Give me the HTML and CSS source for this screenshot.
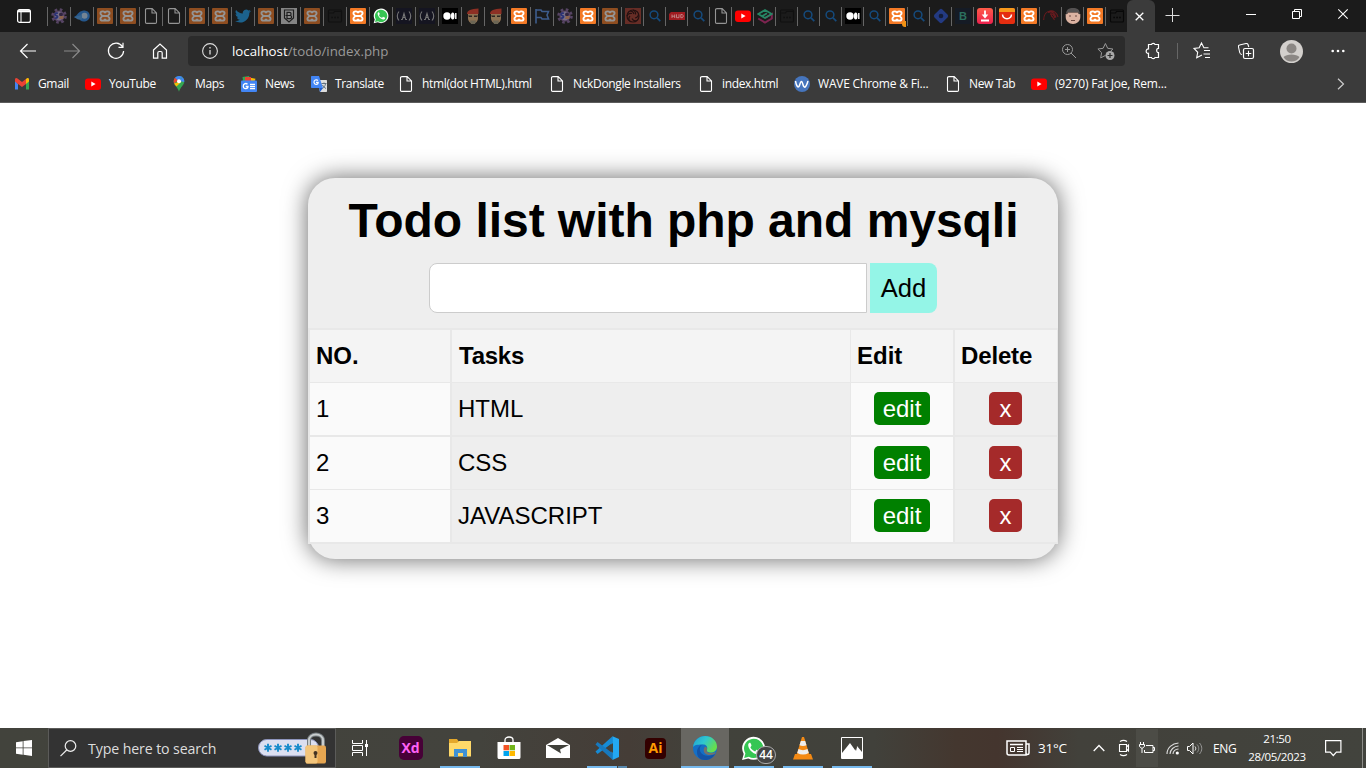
FILE: index.html
```html
<!DOCTYPE html>
<html lang="en">
<head>
<meta charset="utf-8">
<title>Todo list</title>
<link rel="stylesheet" href="styles.css">
</head>
<body>
<svg class="sprite" aria-hidden="true">
  <symbol id="xampp" viewBox="0 0 16 16"><rect width="16" height="16" rx="1" fill="#f47a26"/><path d="M8 5.300C8 2.700 3.400 2.700 3.400 5.300c0 1.500 1.600 1.400 1.600 2.700S3.400 9.200 3.400 10.700c0 2.600 4.600 2.600 4.600 0 0 2.600 4.600 2.600 4.600 0 0-1.500-1.600-1.400-1.600-2.700s1.600-1.200 1.600-2.700C12.600 2.700 8 2.700 8 5.300zM5.500 8h5" fill="none" stroke="#fff" stroke-width="1.800"/></symbol>
  <symbol id="gear" viewBox="0 0 16 16"><circle cx="8" cy="8" r="6.500" fill="none" stroke="#8c6ba5" stroke-width="2.600" stroke-dasharray="2.600 2.500"/><circle cx="8" cy="8" r="5" fill="#c9b8e4" stroke="#8a62a4" stroke-width="1.200"/><path d="M7 5.300c-3-1-4 1.700-1.700 2.300S6.500 10.500 3.700 10" fill="none" stroke="#3949c8" stroke-width="1.700"/><circle cx="10" cy="6.500" r="2" fill="#452f63"/><path d="M8 11l1-3h4l-1 3z" fill="#f0a67a"/></symbol>
  <symbol id="swoosh" viewBox="0 0 16 16"><path d="M0 9C3 8 4.500 3 9.500 2.500c4 0 6.300 2.200 6.300 5.400S13 13.500 9.500 13.500c-2.500 0-3-1-4.500-2.500z" fill="#2f8cf0"/><circle cx="10.500" cy="7.800" r="3" fill="#c2e2ff"/><path d="M0 9l8-2v4.500H4z" fill="#4fa6f5"/></symbol>
  <symbol id="doc" viewBox="0 0 16 16"><path d="M4 .6h5.200l4.300 4.300v9.300c0 .8-.4 1.200-1.200 1.200H3.700c-.8 0-1.200-.4-1.200-1.200V1.800C2.500 1 3 .6 4 .6zM9 .8V5h4.300" fill="none" stroke="#fff" stroke-width="1.100"/></symbol>
  <symbol id="twitter" viewBox="0 0 24 24"><path fill="#1da1f2" d="M23.950 4.570a10 10 0 0 1-2.820.780 4.960 4.960 0 0 0 2.160-2.720 9.900 9.900 0 0 1-3.120 1.190 4.920 4.920 0 0 0-8.390 4.480A14 14 0 0 1 1.640 3.160a4.920 4.920 0 0 0 1.520 6.570 4.900 4.900 0 0 1-2.230-.610v.060a4.920 4.920 0 0 0 3.950 4.830 5 5 0 0 1-2.210.080 4.940 4.940 0 0 0 4.600 3.420A9.870 9.870 0 0 1 0 19.540a14 14 0 0 0 7.550 2.210c9.140 0 14.310-7.720 13.980-14.650a9.900 9.900 0 0 0 2.420-2.530z"/></symbol>
  <symbol id="shield" viewBox="0 0 16 16"><rect width="16" height="16" fill="#e2e2e2"/><path d="M3.500 2h9v8L8 14l-4.500-4z" fill="#eee" stroke="#222" stroke-width="1.200"/><path d="M6 4.300h2.500a1.600 1.600 0 0 1 0 3.200H6zm0 3.200h3a1.600 1.600 0 0 1 0 3.200H6zM4.500 7.500h2" fill="none" stroke="#222" stroke-width="1.200"/></symbol>
  <symbol id="folder" viewBox="0 0 16 16"><path d="M2.500 2h11c.8 0 1 .4 1 1v10c0 .7-.3 1-1 1h-11c-.7 0-1-.3-1-1V3c0-.7.300-1 1-1zM1.500 5h5l1-1.500h7" fill="none" stroke="#080808" stroke-width="1.100"/><path d="M4.300 9.500h1.700M7.200 9.500h1.700M10.100 9.500h1.700" stroke="#080808" stroke-width="1.600"/></symbol>
  <symbol id="wa" viewBox="0 0 24 24"><path d="M1 23l1.600-5.700A11 11 0 1 1 7 21.500z" fill="#fff"/><path d="M3 21l1.200-4.300A9.300 9.300 0 1 1 7.600 20z" fill="#36c653"/><path d="M8.200 6.500c-1 .6-1.500 1.500-1.200 3 .8 3.800 4.200 7.200 8 7.900 1.500.2 2.700-.7 3-1.700.2-.7.100-1-.4-1.300l-2.100-1c-.4-.2-.7-.1-1 .3l-.9 1.100c-2-.7-3.700-2.200-4.600-4.100l.9-1.200c.2-.4.2-.7 0-1.100l-.8-1.600c-.2-.400-.5-.5-.9-.300z" fill="#fff"/></symbol>
  <symbol id="fcc" viewBox="0 0 16 16"><rect width="16" height="16" fill="#151521"/><path d="M3 3.500C.7 6 .7 10 3 12.500M13 3.500c2.300 2.500 2.300 6.500 0 9M5 11.500h1.300L8 5.500l1.700 6H11M7 9.500h2" fill="none" stroke="#777" stroke-width="1.100"/></symbol>
  <symbol id="medium" viewBox="0 0 16 16"><rect width="16" height="16" fill="#000"/><circle cx="5" cy="8" r="3.700" fill="#fff"/><ellipse cx="10.700" cy="8" rx="1.800" ry="3.500" fill="#fff"/><path d="M13.800 5v6" stroke="#fff" stroke-width="1.400"/></symbol>
  <symbol id="ninja" viewBox="0 0 16 16"><path d="M3 6h10v4c0 3-2 5.500-5 5.500S3 13 3 10z" fill="#f3bd83"/><path d="M2 6C2 2 6 1 13.500.5L13.500 6z" fill="#f3412c"/><path d="M3 7.500h4v1.500H4zM9 7.500h4L12 9H9z" fill="#3c2f27"/><path d="M5 12.500h6l-1 3.500H6z" fill="#b5a98a"/></symbol>
  <symbol id="flag" viewBox="0 0 16 16"><path d="M2 1v14.500M2 2h5l1 1.500h6.500L13 7l1.500 4H8L7 9.500H2" fill="none" stroke="#5c96f0" stroke-width="1.600"/></symbol>
  <symbol id="swirl" viewBox="0 0 16 16"><rect width="16" height="16" fill="#e34b38"/><circle cx="8" cy="8" r="6" fill="none" stroke="#300" stroke-width="1.200"/><path d="M8 2c2 1 3 2 2.500 4.500M13.500 6c0 2.500-1 3.500-3.500 4M12 12.500c-2 1-4 0-5-2M5 13.500c-1.500-2-1.500-4 0-5.500M2 8c1-2.500 2.500-3 5-2.500M5 3c2 0 3.500 1 4 3" fill="none" stroke="#300" stroke-width="1.200"/></symbol>
  <symbol id="find" viewBox="0 0 16 16"><circle cx="7" cy="6.800" r="3.900" fill="none" stroke="#154a7c" stroke-width="1.500"/><path d="M10 9.800l3.300 3.300" stroke="#154a7c" stroke-width="1.700"/></symbol>
  <symbol id="hud" viewBox="0 0 16 16"><path d="M2 4h14v8H0V6z" fill="#a01b20"/><path d="M3 6.500v3.500M5.700 6.500v3.500M3 8.200h2.700M7.500 6.300v3.400H10V6.300M11.800 6.500h1.500l.8 1v1.500l-.8.7h-1.500z" fill="none" stroke="#c79a9a" stroke-width=".8"/></symbol>
  <symbol id="yt" viewBox="0 0 16 16"><rect y="2.500" width="16" height="11.500" rx="3" fill="#f00"/><path d="M6.300 5.600v5l4.300-2.500z" fill="#fff"/></symbol>
  <symbol id="hex" viewBox="0 0 16 16"><path d="M1.200 10.500L8 14.500l6.800-4V6L8 10" fill="none" stroke="#7d2450" stroke-width="2"/><path d="M8 10L1.200 6 8 2l6.800 4L8 10 5 8.200l5-3" fill="none" stroke="#268765" stroke-width="1.800"/></symbol>
  <symbol id="diamond" viewBox="0 0 16 16"><rect x="2.400" y="2.400" width="11.200" height="11.200" rx="2" transform="rotate(45 8 8)" fill="#233a82"/><circle cx="8" cy="8" r="2.300" fill="#131c38"/></symbol>
  <symbol id="down" viewBox="0 0 16 16"><defs><linearGradient id="rd" x1="0" y1="0" x2="0" y2="1"><stop stop-color="#ff5b48"/><stop offset="1" stop-color="#ed214e"/></linearGradient></defs><rect width="16" height="16" rx="3" fill="url(#rd)"/><path d="M8 2.500v6M4 12.500h8" stroke="#fff" stroke-width="1.800"/><path d="M4.700 6.500h6.600L8 10.500z" fill="#fff"/></symbol>
  <symbol id="ali" viewBox="0 0 16 16"><rect width="16" height="16" rx="2" fill="#e52d10"/><path d="M0 4V2c0-1.300.7-2 2-2h12c1.300 0 2 .7 2 2v2z" fill="#f7991c"/><path d="M3.500 6.500c.5 5.500 8.500 5.500 9 0" fill="none" stroke="#fff" stroke-width="1.500"/></symbol>
  <symbol id="radar" viewBox="0 0 16 16"><path d="M.7 12C.5 1 13 0 15 9M5 4.500c4-2 7 1 8 5M7 6c2.500-1 4 1 5 4M8 8c1.500 0 2 1 3 3M7.500 6l4 6" fill="none" stroke="#6b1a1e" stroke-width="1.100"/></symbol>
  <symbol id="face" viewBox="0 0 16 16"><path d="M.7 6h14.600v3c0 4-3.300 7-7.300 7S.7 13 .7 9z" fill="#dcb3a2"/><path d="M1 7C1 1 4 0 8 0s7 1 7 7l-1.500-3h-11z" fill="#555252"/><path d="M2.500 4.500h11V7h-11z" fill="#dcb3a2"/><path d="M4 8h2M10 8h2M6 12.500h4" stroke="#6c4a42" stroke-width="1"/></symbol>
</svg>

<header class="browser">
  <div class="tabs">
    <span class="workspace"><svg width="14" height="14" viewBox="0 0 14 14"><rect x=".6" y=".6" width="12.800" height="12.800" rx="2" fill="none" stroke="#fff" stroke-width="1.200"/><path d="M1 2.200h12" stroke="#fff" stroke-width="2.200"/><path d="M4 3v10" stroke="#fff" stroke-width="1"/></svg></span>
    <i class="tab dim"><svg><use href="#gear"/></svg></i><i class="tab dim"><svg><use href="#swoosh"/></svg></i><i class="tab dim"><svg><use href="#xampp"/></svg></i><i class="tab dim"><svg><use href="#xampp"/></svg></i><i class="tab dim"><svg><use href="#doc"/></svg></i><i class="tab dim"><svg><use href="#doc"/></svg></i><i class="tab dim"><svg><use href="#xampp"/></svg></i><i class="tab dim"><svg><use href="#xampp"/></svg></i><i class="tab dim"><svg><use href="#twitter"/></svg></i><i class="tab dim"><svg><use href="#xampp"/></svg></i><i class="tab dim"><svg><use href="#shield"/></svg></i><i class="tab dim"><svg><use href="#xampp"/></svg></i><i class="tab dim"><svg><use href="#folder"/></svg></i>
    <i class="tab"><svg><use href="#xampp"/></svg></i><i class="tab"><svg><use href="#wa"/></svg></i><i class="tab"><svg><use href="#fcc"/></svg></i><i class="tab"><svg><use href="#fcc"/></svg></i><i class="tab"><svg><use href="#medium"/></svg></i><i class="tab dim"><svg><use href="#ninja"/></svg></i><i class="tab dim"><svg><use href="#ninja"/></svg></i><i class="tab"><svg><use href="#xampp"/></svg></i><i class="tab dim"><svg><use href="#flag"/></svg></i><i class="tab dim"><svg><use href="#gear"/></svg></i>
    <i class="tab narrow"><svg><use href="#xampp"/></svg></i><i class="tab dim"><svg><use href="#xampp"/></svg></i>
    <i class="tab narrow faint"><svg><use href="#swirl"/></svg></i><i class="tab narrow"><svg><use href="#find"/></svg></i><i class="tab narrow"><svg><use href="#hud"/></svg></i><i class="tab narrow"><svg><use href="#find"/></svg></i><i class="tab narrow dim"><svg><use href="#doc"/></svg></i><i class="tab narrow"><svg><use href="#yt"/></svg></i><i class="tab narrow"><svg><use href="#hex"/></svg></i><i class="tab narrow dim"><svg><use href="#folder"/></svg></i><i class="tab narrow"><svg><use href="#find"/></svg></i><i class="tab narrow"><svg><use href="#find"/></svg></i><i class="tab narrow"><svg><use href="#medium"/></svg></i><i class="tab narrow"><svg><use href="#find"/></svg></i><i class="tab narrow alert"><svg><use href="#xampp"/></svg></i><i class="tab narrow"><svg><use href="#find"/></svg></i><i class="tab narrow"><svg><use href="#diamond"/></svg></i><i class="tab narrow"><b class="letter">B</b></i><i class="tab narrow"><svg><use href="#down"/></svg></i><i class="tab narrow"><svg><use href="#ali"/></svg></i><i class="tab narrow"><svg><use href="#xampp"/></svg></i><i class="tab narrow"><svg><use href="#radar"/></svg></i><i class="tab narrow"><svg><use href="#face"/></svg></i><i class="tab narrow"><svg><use href="#xampp"/></svg></i><i class="tab narrow"><svg><use href="#folder"/></svg></i>
    <span class="active-tab"><svg width="9" height="9" viewBox="0 0 9 9"><path d="M.7.7l7.600 7.600M8.300.7L.7 8.300" stroke="#fff" stroke-width="1.300"/></svg></span>
    <span class="new-tab"><svg width="14" height="14" viewBox="0 0 14 14"><path d="M6.500 0v14M-.5 7.500h14" stroke="#ddd"/></svg></span>
    <span class="window-controls">
      <svg width="10" height="10" viewBox="0 0 10 10"><path d="M0 5.500h10" stroke="#fff"/></svg>
      <svg width="10" height="10" viewBox="0 0 10 10"><path d="M.5 2.500h7v7h-7zM2.500 2.500v-2h7v7h-2" fill="none" stroke="#fff"/></svg>
      <svg width="10" height="10" viewBox="0 0 10 10"><path d="M.3.3l9.400 9.400M9.700.3L.3 9.700" stroke="#fff" stroke-width="1.100"/></svg>
    </span>
  </div>

  <div class="toolbar">
    <div class="nav">
      <svg viewBox="0 0 18 18"><path d="M17 9H1.500M8.500 2L1.500 9l7 7" fill="none" stroke="#fff" stroke-width="1.200"/></svg>
      <svg class="off" viewBox="0 0 18 18"><path d="M1 9h15.500M9.500 2l7 7-7 7" fill="none" stroke="#fff" stroke-width="1.200"/></svg>
      <svg viewBox="0 0 18 18"><path d="M15.500 4.700A7.600 7.600 0 1 0 16.600 9M16 .8v4.500h-4.500" fill="none" stroke="#fff" stroke-width="1.200"/></svg>
      <svg viewBox="0 0 18 18"><path d="M2.500 8L9 2l6.500 6v8.200h-4.300V11c0-1-.5-1.500-1.400-1.500H8.200c-.900 0-1.400.5-1.400 1.500v5.200H2.500z" fill="none" stroke="#fff" stroke-width="1.200"/></svg>
    </div>
    <div class="address">
      <svg width="16" height="16" viewBox="0 0 16 16"><circle cx="8" cy="8" r="7.400" fill="none" stroke="#ddd" stroke-width="1.100"/><path d="M8 7v4.500M8 4v1.500" stroke="#ddd" stroke-width="1.300"/></svg>
      <p class="url"><b>localhost</b>/todo/index.php</p>
      <svg width="16" height="16" viewBox="0 0 16 16"><circle cx="6.500" cy="6.500" r="5" fill="none" stroke="#999"/><path d="M10 10l5 5M4 6.500h5M6.500 4v5" stroke="#999"/></svg>
      <svg width="18" height="18" viewBox="0 0 18 18"><path d="M8.500 13.400l-4.800 2.500.9-5.200L.9 7l5.200-.7 2.300-4.800 2.300 4.800 5.200.7-2 2" fill="none" stroke="#999"/><circle cx="13" cy="13.500" r="4.500" fill="#aaa"/><path d="M13 11v5M10.500 13.500h5" stroke="#2b2b2b" stroke-width="1.200"/></svg>
    </div>
    <div class="actions">
      <svg width="18" height="18" viewBox="0 0 18 18"><path d="M4.500 2.500h3c.2-1.500 3.300-1.500 3.500 0h3.500v3.800c-2.400-.2-2.400 4.500 0 4.300v4.900H11c-.3 1.500-3.200 1.500-3.500 0h-3v-4.200C1.500 12 1.300 6.500 4.500 7z" fill="none" stroke="#fff" stroke-width="1.200"/></svg>
      <i class="divider"></i>
      <svg width="18" height="18" viewBox="0 0 18 18"><path d="M9 13L3.700 15.800l1-5.500L1 6.500l5.200-.8L8.500 1l2.400 4.700h4.600M11 8.500h6M10.500 12H17M12 15.500h5" fill="none" stroke="#fff" stroke-width="1.100"/></svg>
      <svg width="18" height="18" viewBox="0 0 18 18"><rect x="6.500" y="6.500" width="10" height="10" rx="1.500" fill="none" stroke="#fff" stroke-width="1.200"/><path d="M11.500 8.700v5.600M8.700 11.500h5.600M5 12.500c-1.500 0-2-.7-2.300-2L1.500 5c-.2-1 0-1.800 1-2L9 1.500c1-.2 1.700.2 2 1l.8 2.500" fill="none" stroke="#fff" stroke-width="1.100"/></svg>
      <svg width="23" height="23" viewBox="0 0 23 23"><circle cx="11.500" cy="11.500" r="11.500" fill="#d3d0cd"/><circle cx="11.500" cy="8.500" r="5" fill="#8b8784"/><path d="M3.500 17c3-3.500 13-3.500 16 0-3 6-13 6-16 0z" fill="#8b8784"/></svg>
      <svg width="14" height="4" viewBox="0 0 14 4"><circle cx="1.700" cy="2" r="1.300" fill="#fff"/><circle cx="7" cy="2" r="1.300" fill="#fff"/><circle cx="12.300" cy="2" r="1.300" fill="#fff"/></svg>
    </div>
  </div>

  <nav class="bookmarks">
    <a><svg viewBox="0 0 16 16"><path d="M1 4v9.500h3V8z" fill="#4285f4"/><path d="M12 8v5.500h3V4z" fill="#34a853"/><path d="M1 3.500c0-1.500 1.500-2 2.500-1L8 6l4.500-3.500L12 8l-4 3-4-3-3-2.500z" fill="#ea4335"/><path d="M12 3l1-.7c1-.6 2 .2 2 1.200v2L12 8z" fill="#fbbc04"/></svg>Gmail</a>
    <a><svg viewBox="0 0 16 16"><use href="#yt"/></svg>YouTube</a>
    <a><svg viewBox="0 0 16 16"><path d="M8 0a5.300 5.300 0 0 0-5.300 5.300c0 4 4 5.700 5.300 10.500 1.300-4.800 5.300-6.500 5.300-10.500A5.300 5.300 0 0 0 8 0z" fill="#34a853"/><path d="M8 0a5.300 5.300 0 0 0-4 1.800L7 5l4.500-4A5.300 5.300 0 0 0 8 0z" fill="#4285f4"/><path d="M4 1.800C2.300 3.500 2.500 6 3.200 7.500L7 4.500z" fill="#ea4335"/><path d="M3.200 7.500c.7 1.500 1.500 2 2.300 3L11 5z" fill="#fbbc04"/><path d="M11.400 1.200L8 5l5.200 1c.3-2-.4-3.800-1.800-4.800z" fill="#4285f4"/><circle cx="8" cy="5.300" r="2" fill="#fff"/></svg>Maps</a>
    <a><svg viewBox="0 0 16 16"><path d="M1.500 1L8 0l1 5H2z" fill="#34a853"/><path d="M8 1.500l6.500 1.300L13 7H7z" fill="#fbbc04"/><path d="M4 1h6v4H4z" fill="#ea4335"/><rect y="4.500" width="16" height="11.500" rx="1" fill="#4285f4"/><path d="M6.500 8.200c-2-1.700-4.500 0-4.200 2.300.4 3 4.700 2.700 4.700 0H4.700M9 8.300h5M9 10.500h5M9 12.700h5" fill="none" stroke="#fff" stroke-width="1.300"/></svg>News</a>
    <a><svg viewBox="0 0 16 16"><path d="M6 4h9c.7 0 1 .3 1 1v10c0 .7-.3 1-1 1H9z" fill="#ddd"/><path d="M1 0h7l4 12H1c-.7 0-1-.3-1-1V1c0-.7.3-1 1-1z" fill="#4285f4"/><path d="M8 12h4l-3 4z" fill="#1d5dd0"/><path d="M7 4.500c-1.600-1.500-4.300-.3-4 2 .4 2.700 4.300 2.300 4.200-.2H5" fill="none" stroke="#fff" stroke-width="1.200"/><path d="M10.500 7.500h5M13 6.500v1M14.500 8c-.5 2-1.500 3.500-3 4.500M11.500 9c1 1.700 2 2.700 3.500 3.500" fill="none" stroke="#607080"/></svg>Translate</a>
    <a><svg viewBox="0 0 16 16"><use href="#doc"/></svg>html(dot HTML).html</a>
    <a><svg viewBox="0 0 16 16"><use href="#doc"/></svg>NckDongle Installers</a>
    <a><svg viewBox="0 0 16 16"><use href="#doc"/></svg>index.html</a>
    <a class="wide"><svg viewBox="0 0 16 16"><circle cx="8" cy="8" r="8" fill="#4675bd"/><path d="M1.500 5c1 6 3 8 4.300 3.500C7 4 8 5 8.800 8c1.300 5 3 4 5.200-3" fill="none" stroke="#fff" stroke-width="1.500"/></svg>WAVE Chrome &amp; Fi...</a>
    <a><svg viewBox="0 0 16 16"><use href="#doc"/></svg>New Tab</a>
    <a class="wide"><svg viewBox="0 0 16 16"><use href="#yt"/></svg>(9270) Fat Joe, Rem...</a>
    <svg class="more" width="8" height="12" viewBox="0 0 8 12"><path d="M1 .7L6.500 6 1 11.300" fill="none" stroke="#ccc" stroke-width="1.200"/></svg>
  </nav>
</header>

<main>
  <section class="card">
    <h1>Todo list with php and mysqli</h1>
    <form class="entry"><input type="text" aria-label="Task"><button type="button">Add</button></form>
    <div class="table">
      <div class="row head"><b>NO.</b><b>Tasks</b><b>Edit</b><b>Delete</b></div>
      <div class="row"><span>1</span><span>HTML</span><span><a class="edit">edit</a></span><span><a class="del">x</a></span></div>
      <div class="row"><span>2</span><span>CSS</span><span><a class="edit">edit</a></span><span><a class="del">x</a></span></div>
      <div class="row"><span>3</span><span>JAVASCRIPT</span><span><a class="edit">edit</a></span><span><a class="del">x</a></span></div>
    </div>
  </section>
</main>

<footer class="taskbar">
  <span class="start"><svg width="16" height="16" viewBox="0 0 16 16"><path d="M0 2.200L6.700 1.200v6.300H0zM7.500 1.100L16 0v7.500H7.500zM0 8.300h6.700v6.400L0 13.800zM7.500 8.300H16V16l-8.500-1.200z" fill="#fff"/></svg></span>
  <div class="search">
    <svg width="17" height="17" viewBox="0 0 17 17"><circle cx="10.500" cy="6" r="5.300" fill="none" stroke="#eee" stroke-width="1.200"/><path d="M6.700 10L.5 16.200" stroke="#eee" stroke-width="1.200"/></svg>
    <span>Type here to search</span>
    <svg width="69" height="34" viewBox="0 0 69 34"><rect x=".5" y="8.500" width="60" height="16.500" rx="8.200" fill="#dcdff0" stroke="#8d94bd"/><g stroke="#168bcb" stroke-width="1.900"><path id="star" d="M10 12.700v8M6.500 14.700l7 4M6.500 18.700l7-4"/><use href="#star" x="10"/><use href="#star" x="20"/><use href="#star" x="30"/></g><path d="M51 15V9.500c0-8 14-8 14 0V15" fill="none" stroke="#777e82" stroke-width="4"/><path d="M51 15V9.500c0-8 14-8 14 0V15" fill="none" stroke="#c9cdce" stroke-width="2"/><rect x="47.500" y="14.500" width="20.500" height="18" rx="2" fill="#e6a651"/><rect x="47.500" y="14.500" width="12" height="18" rx="2" fill="#f3c57b"/><circle cx="57.500" cy="22" r="2" fill="#432"/><path d="M57.500 22v5" stroke="#432" stroke-width="2"/></svg>
  </div>
  <div class="apps">
    <i class="view"><svg width="16" height="16" viewBox="0 0 16 16"><path d="M.5 0v3.500h10V0M.5 16v-3.500h10V16M.5 5.500h10v5H.5zM14.500 0v4M14.500 7v9" fill="none" stroke="#fff"/><path d="M13 4h3v3h-3z" fill="#fff"/></svg></i>
    <i><b class="adobe xd">Xd</b></i>
    <i class="run"><svg width="22" height="20" viewBox="0 0 22 20"><path d="M0 1h8l2 3h12v14H0z" fill="#e4a82b"/><path d="M0 5h8l2-2h12v15.500H0z" fill="#ffd969"/><path d="M5 11h13v8h-4v-4H9v4H5z" fill="#3f91d5"/></svg></i>
    <i><svg width="24" height="24" viewBox="0 0 24 24"><path d="M8 7V4c0-4 8-4 8 0v3" fill="none" stroke="#fff" stroke-width="1.300"/><path d="M.5 6h23v15c0 1.500-.5 2-2 2h-19c-1.500 0-2-.5-2-2z" fill="#fff"/><path d="M6.500 9H12v5.300H6.500z" fill="#f35325"/><path d="M12.500 9H18v5.300h-5.500z" fill="#72b51b"/><path d="M6.500 15H12v5H6.500z" fill="#00a4ef"/><path d="M12.500 15H18v5h-5.500z" fill="#ffb900"/></svg></i>
    <i><svg width="24" height="20" viewBox="0 0 24 20"><path d="M0 7L12 0l12 7v13H0z" fill="#fff"/><path d="M1 7h22l-9 4.500 1 4z" fill="#40403a"/></svg></i>
    <i class="run split"><svg width="24" height="24" viewBox="0 0 24 24"><path d="M17.500.3L24 3v18l-6.500 3-1-6V6z" fill="#23a8f2"/><path d="M17.500.3L.5 15.500l2 2.500L18 6.500z" fill="#168bd5"/><path d="M17.500 23.700L.5 8.500l2-2.500L18 17.500z" fill="#1779be"/><path d="M18 7v10l-6-5z" fill="#42423c"/></svg></i>
    <i><b class="adobe ai">Ai</b></i>
    <i class="run current"><svg width="24" height="24" viewBox="0 0 24 24"><defs><linearGradient id="eg" x1="0" y1="0" x2="1" y2=".5"><stop stop-color="#239dce"/><stop offset=".5" stop-color="#2fc7d0"/><stop offset="1" stop-color="#66df4d"/></linearGradient></defs><circle cx="12" cy="12" r="12" fill="#146fc5"/><path d="M0 11C1 4 6 0 12 0c7 0 12 5 12 10.500 0 4-3 6-6 6-3 0-5-1-4-3 1-3-1-5-4-5-4 0-8 0-10 2.500z" fill="url(#eg)"/><path d="M10 8.500c-3 1-4 4-2.500 7.500 2 4 8 5 14.500 2-2 4-6 6-10 6-5 0-8-3-8-8 0-4 3-7 6-7.500z" fill="#1453a5"/><path d="M14 13.500c-1 2 1 3.500 4 3.500 2 0 3.500-.6 4.500-1.300l-.8 2.300c-6 2.500-11 .5-11-4 0-1.500.7-2.700 1.500-3.300 1.500.3 2.300 1.300 1.800 2.800z" fill="#73716d"/></svg></i>
    <i class="run wa"><svg width="25" height="25" viewBox="0 0 24 24"><use href="#wa"/></svg><em>44</em></i>
    <i class="run"><svg width="20" height="23" viewBox="0 0 20 23"><path d="M2 17h16l2 5.500H0z" fill="#f58a13"/><path d="M9 0h2l5.500 18c-3 2-10 2-13 0z" fill="#f28a16"/><path d="M7.800 4h4.400l1.300 4.200c-2 1-5 1-7 0zM5.500 12c3 1.500 6 1.500 9 0l1.300 4c-4 2-7.600 2-11.600 0z" fill="#eee"/></svg></i>
    <i class="run"><svg width="22" height="22" viewBox="0 0 22 22"><path d="M.5.5h21v21H.5z" fill="none" stroke="#fff"/><path d="M1 16l8-10 5 7 2-4 5 6v6H1z" fill="#fff"/><path d="M13 10l2 4 1-4-1-2z" fill="#40403a"/></svg></i>
  </div>
  <div class="tray">
    <svg width="24" height="16" viewBox="0 0 24 16"><path d="M1 1h19v14H3c-1.300 0-2-.7-2-2zM20 4h3v9c0 2-3 2-3 0M4 4.500h13" fill="none" stroke="#fff" stroke-width="1.500"/><path d="M4.500 7.500h4v4h-4zM11 7.500h6M11 9.500h6M11 11.500h6" fill="none" stroke="#fff"/></svg>
    <span class="temp">31°C</span>
    <svg class="chev" width="12" height="8" viewBox="0 0 12 8"><path d="M.7 7L6 1.500 11.300 7" fill="none" stroke="#fff" stroke-width="1.300"/></svg>
    <svg class="cam" width="12" height="16" viewBox="0 0 12 16"><path d="M1.500 4.500h7v7h-7zM8.500 7l2-2v6l-2-2M2 1.500c2-1.300 5-1.300 7 0M2 14.500c2 1.300 5 1.300 7 0" fill="none" stroke="#fff" stroke-width="1.100"/></svg>
    <span class="power"><svg width="16" height="12" viewBox="0 0 16 12"><path d="M7 3.500h7v7H5.500V8M14 5.500h1.500v3H14M1.500 0v2.500M4.500 0v2.500M.5 2.500h5v2L3 6.500.5 4.500zM3 6.500V11" fill="none" stroke="#fff"/></svg></span>
    <svg class="wifi" width="13" height="13" viewBox="0 0 13 13"><path d="M1 12C1 6 6 1.500 12.500 1M4 12c0-4 4-8 8.500-8M7 12c0-3 2.500-5 5.500-5" fill="none" stroke="#ddd" stroke-width="1.100"/><circle cx="11.300" cy="11" r="1.600" fill="#fff"/></svg>
    <svg class="sound" width="16" height="13" viewBox="0 0 16 13"><path d="M.5 4.500h2L6 1v11L2.500 8.500h-2zM8 4.500c1 1.200 1 2.800 0 4" fill="none" stroke="#fff"/><path d="M10 2.500c2.300 2.300 2.300 5.700 0 8M12.500 1c3 3.500 3 7.500 0 11" fill="none" stroke="#999"/></svg>
    <span class="lang">ENG</span>
    <span class="clock">21:50<br>28/05/2023</span>
    <svg class="note" width="17" height="17" viewBox="0 0 17 17"><path d="M.6.600h15.300v11.500h-4.500L8.300 15.500 5.200 12.100H.6z" fill="none" stroke="#fff" stroke-width="1.200"/></svg>
    <i class="edge"></i>
  </div>
</footer>
</body>
</html>
```

FILE: styles.css
```css
* { box-sizing: border-box; }
body { margin: 0; width: 1366px; height: 768px; overflow: hidden; display: flex; flex-direction: column; background: #fff; font-family: "Liberation Sans", Arial, sans-serif; color: #000; }
svg { display: block; flex: none; overflow: visible; }
i, em { font-style: normal; }
.sprite { position: absolute; width: 0; height: 0; }

/* browser window */
.browser { flex: none; height: 103px; background: #3b3b3b; border-bottom: 1px solid #5c5c5c; font-family: "Open Sans", "Noto Sans", sans-serif; color: #fff; }
.tabs { display: flex; height: 32px; background: #1b1b1b; }
.workspace { width: 47px; padding: 9px 0 0 17px; }
.tab { flex: none; width: 23px; height: 19px; margin-top: 7px; padding: 1px 0 0 3px; border-left: 1px solid #666; }
.tab.narrow { width: 22px; }
.tab svg { width: 16px; height: 16px; }
.tab.dim svg { opacity: .53; }
.tab.faint svg { opacity: .38; }
.tab.alert { position: relative; }
.tab.alert::after { content: ""; position: absolute; left: 16px; top: 14px; width: 4px; height: 6px; border-radius: 3px 0 0 3px; background: #f29315; }
.letter { display: block; width: 16px; height: 16px; background: #151b25; color: #2c705f; font: bold 11px/16px "Liberation Sans", sans-serif; text-align: center; }
.active-tab { flex: none; width: 28px; padding: 12px 0 0 8px; background: #3b3b3b; border-radius: 6px 6px 0 0; }
.new-tab { width: 91px; padding: 8px 0 0 11px; }
.window-controls { display: flex; gap: 36px; padding-top: 9px; }
.toolbar { display: flex; height: 38px; align-items: center; }
.nav { display: flex; gap: 26px; width: 188px; padding-left: 19px; }
.nav svg { width: 18px; height: 18px; }
.nav .off { opacity: .4; }
.address { display: flex; align-items: center; width: 937px; height: 30px; padding: 0 10px 0 14px; background: #2b2b2b; border-radius: 4px; }
.url { margin: 0 auto 0 14px; font-size: 13.3px; line-height: 20px; color: #999; }
.url b { font-weight: 400; color: #fff; }
.address > svg:last-child { margin-left: 20px; }
.actions { display: flex; align-items: center; padding-left: 19px; }
.divider { width: 1px; height: 16px; margin: 0 15px; background: #666; }
.actions svg:nth-of-type(3) { margin-left: 26px; }
.actions svg:nth-of-type(4) { margin-left: 25px; }
.actions svg:nth-of-type(5) { margin-left: 28px; }
.bookmarks { display: grid; grid-template-columns: 71px 86px 70px 70px 87px 151px 149px 96px 151px 86px 306px 8px; height: 28px; padding-left: 14px; align-items: center; font-size: 12px; letter-spacing: -.35px; }
.bookmarks a { display: flex; gap: 8px; align-items: center; white-space: nowrap; line-height: 18px; }
.bookmarks a.wide { letter-spacing: -.2px; }
.bookmarks a svg { width: 16px; height: 16px; }

/* todo page */
main { flex: 1; padding: 75px 308px 0; }
.card { height: 381px; background: #eee; border-radius: 27px; box-shadow: 0 0 25px rgba(0, 0, 0, .6); }
h1 { margin: 0; height: 85px; padding: 15px 0 0 1px; font-size: 48px; line-height: 55px; letter-spacing: -.04px; text-align: center; white-space: nowrap; }
.entry { display: flex; justify-content: center; gap: 3px; height: 65px; }
.entry input { width: 438px; height: 50px; padding: 0 10px; border: 1px solid #ccc; border-radius: 8px 0 0 8px; background: #fff; }
.entry button { width: 67px; height: 50px; padding: 0; border: 0; border-radius: 0 8px 8px 0; background: #94f5e7; color: #000; font: 25.6px "Liberation Sans", Arial, sans-serif; }
.table { border-top: 2px solid #e8e8e8; font-size: 24px; line-height: 52px; }
.row { display: grid; grid-template-columns: 144px 399px 104px 103px; height: 54px; }
.row:nth-child(odd) { height: 53px; }
.row > * { border: solid #e8e8e8; border-width: 0 1px 2px 0; padding-left: 6px; background: #eee; }
.row:nth-child(odd) > * { border-bottom-width: 1px; }
.table .row:last-child > * { border-bottom-width: 2px; }
.row:last-child { height: 54px; }
.row > :first-child { border-left-width: 2px; border-right-width: 2px; background: #fafafa; }
.row > :nth-child(3) { border-right-width: 2px; background: #fafafa; }
.row.head > * { background: #f4f4f4; }
.row > span:nth-child(n+3) { display: flex; justify-content: center; padding: 9px 0 0; }
.row > span:nth-child(4) { padding-right: 1px; }
.head b:nth-child(2) { padding-left: 7px; letter-spacing: -.25px; }
.head b:nth-child(4) { letter-spacing: -.15px; }
.edit, .del { height: 33px; border-radius: 5px; color: #fff; line-height: 33px; text-align: center; }
.edit { width: 56px; background: green; }
.del { width: 33px; background: brown; }

/* taskbar */
.taskbar { flex: none; display: flex; height: 40px; background: linear-gradient(90deg, #42433c 0, #43433d 35%, #453d37 46%, #41423b 52%, #41413b 64%, #44372f 70%, #44352e 73%, #42413b 79%, #42433d 100%); color: #fff; font-family: "Open Sans", "Noto Sans", sans-serif; }
.start { width: 48px; padding: 12px 16px; }
.search { display: flex; align-items: center; width: 288px; height: 40px; padding: 0 8px 0 11px; background: #333; border: 1px solid #5b5b59; font-size: 14.2px; letter-spacing: -.12px; color: #ddd; }
.search span { margin: 0 auto 0 11px; }
.apps { display: flex; }
.apps i { position: relative; display: flex; width: 49px; height: 40px; align-items: center; justify-content: center; }
.apps .view { width: 50px; padding-right: 2px; }
.run::after { content: ""; position: absolute; left: 5px; bottom: 0; width: 40px; height: 2px; background: #76b9ed; }
.split::after { background: linear-gradient(90deg, #76b9ed 30px, #42423c 30px, #42423c 31px, #5888ad 31px); }
.current { background: linear-gradient(90deg, transparent 1px, #686762 1px); }
.current::after { left: 1px; width: 48px; }
.adobe { width: 24px; height: 24px; border-radius: 5px; text-align: center; font-size: 14px; line-height: 23px; }
.xd { background: #470137; color: #ff61f6; }
.ai { width: 21px; height: 21px; background: #300; color: #ff9a00; line-height: 20px; border-radius: 4px; }
.wa em { position: absolute; left: 27px; top: 18px; width: 20px; height: 18px; border: 1px solid #aaa; border-radius: 9px; background: #444; font-size: 12px; font-weight: 600; line-height: 16px; text-align: center; }
.tray { display: flex; align-items: center; margin-left: auto; width: 360px; font-size: 12px; }
.temp { width: 31px; margin-left: 8px; font-size: 13.5px; letter-spacing: -.2px; }
.chev { margin-left: 24px; }
.cam { margin-left: 13px; }
.power { display: flex; width: 22px; height: 38px; margin-left: 6px; align-items: center; justify-content: center; background: #4c4c46; }
.wifi { margin-left: 8px; }
.sound { margin-left: 8px; }
.lang { width: 24px; margin-left: 10px; letter-spacing: -.4px; }
.clock { width: 62px; margin-left: 9px; padding-bottom: 1px; font-size: 11.5px; line-height: 18px; letter-spacing: -.35px; text-align: center; white-space: nowrap; }
.note { margin-left: 17px; }
.edge { width: 1px; height: 40px; margin-left: 20px; background: #8c8c88; }
```
